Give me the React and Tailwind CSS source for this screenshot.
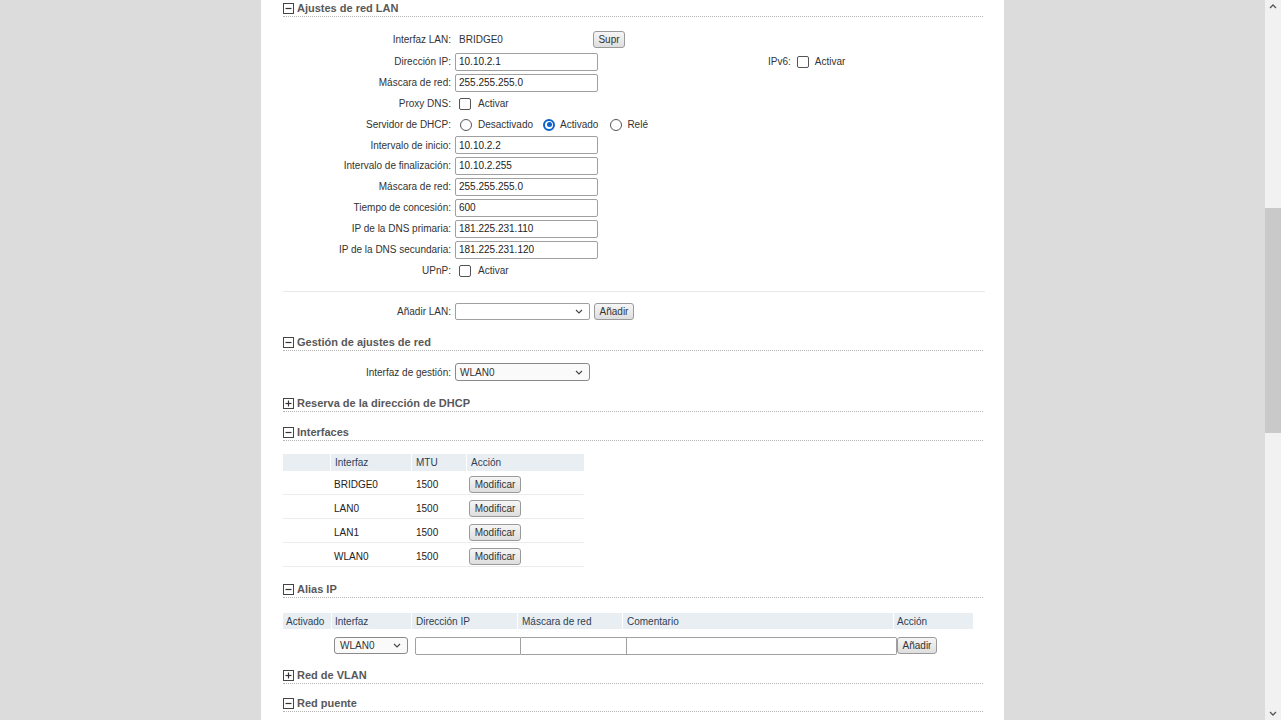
import React from "react";

function SectionHeader({ title, open = true }) {
  return (
    <div className="h-[17px] flex items-center border-b border-dotted border-[#b5b5b5]">
      <span className="w-[11px] h-[11px] border border-[#444] flex items-center justify-center mr-[3px] bg-white">
        <svg width="9" height="9" viewBox="0 0 9 9">
          <line x1="1.5" y1="4.5" x2="7.5" y2="4.5" stroke="#333" strokeWidth="1.2" />
          {!open && <line x1="4.5" y1="1.5" x2="4.5" y2="7.5" stroke="#333" strokeWidth="1.2" />}
        </svg>
      </span>
      <span className="text-[11px] font-bold text-[#585858]">{title}</span>
    </div>
  );
}

function Chevron() {
  return (
    <svg width="8" height="5" viewBox="0 0 8 5" className="shrink-0">
      <polyline points="1,1 4,4 7,1" fill="none" stroke="#444" strokeWidth="1.1" />
    </svg>
  );
}

function TextInput({ value, w = "w-[143px]" }) {
  return (
    <div className={`${w} h-[18px] border border-[#a0a0a0] rounded-[2px] bg-white flex items-center pl-[3px] text-[10px] text-[#222]`}>
      {value}
    </div>
  );
}

function Button({ children, w }) {
  return (
    <div className={`${w} h-[17px] border border-[#9a9a9a] rounded-[3px] bg-gradient-to-b from-[#f6f6f6] to-[#dedede] flex items-center justify-center text-[10px] text-[#333]`}>
      {children}
    </div>
  );
}

function Checkbox() {
  return <span className="w-[12px] h-[12px] border border-[#555] rounded-[2px] bg-white inline-block shrink-0" />;
}

function Radio({ checked }) {
  return checked ? (
    <span className="w-[12px] h-[12px] rounded-full border-[2px] border-[#0b63ce] flex items-center justify-center shrink-0">
      <span className="w-[5px] h-[5px] rounded-full bg-[#0b63ce]" />
    </span>
  ) : (
    <span className="w-[12px] h-[12px] rounded-full border border-[#555] bg-white shrink-0" />
  );
}

function Row({ label, children, h = "h-[21px]" }) {
  return (
    <div className={`${h} flex items-center`}>
      <div className="w-[169px] text-right pr-[1px]">{label}</div>
      <div className="ml-[3px] flex items-center">{children}</div>
    </div>
  );
}

const fields = [
  ["Intervalo de inicio:", "10.10.2.2", "h-[20px]"],
  ["Intervalo de finalización:", "10.10.2.255"],
  ["Máscara de red:", "255.255.255.0"],
  ["Tiempo de concesión:", "600"],
  ["IP de la DNS primaria:", "181.225.231.110"],
  ["IP de la DNS secundaria:", "181.225.231.120"],
];

const interfaces = ["BRIDGE0", "LAN0", "LAN1", "WLAN0"];

export default function App() {
  return (
    <div
      className="h-[720px] w-full flex bg-[#dcdcdc] overflow-hidden text-[10px] text-[#333]"
      style={{ fontFamily: '"Liberation Sans", Arial, sans-serif' }}
    >
      <div className="w-[261px] shrink-0" />
      <div className="w-[743px] shrink-0 bg-white pl-[22px] pr-[21px]">
        <SectionHeader title="Ajustes de red LAN" />

        <div className="mt-[11px]">
          <Row label="Interfaz LAN:" h="h-[23px]">
            <span className="w-[138px] pl-[4px]">BRIDGE0</span>
            <Button w="w-[32px]">Supr</Button>
          </Row>
          <Row label="Dirección IP:">
            <TextInput value="10.10.2.1" />
            <span className="ml-[170px]">IPv6:</span>
            <span className="ml-[6px] flex"><Checkbox /></span>
            <span className="ml-[6px]">Activar</span>
          </Row>
          <Row label="Máscara de red:">
            <TextInput value="255.255.255.0" />
          </Row>
          <Row label="Proxy DNS:">
            <span className="ml-[4px] flex"><Checkbox /></span>
            <span className="ml-[7px]">Activar</span>
          </Row>
          <Row label="Servidor de DHCP:">
            <span className="ml-[5px] flex"><Radio /></span>
            <span className="ml-[6px]">Desactivado</span>
            <span className="ml-[10px] flex"><Radio checked /></span>
            <span className="ml-[5px]">Activado</span>
            <span className="ml-[12px] flex"><Radio /></span>
            <span className="ml-[5px]">Relé</span>
          </Row>
          {fields.map(([l, v, h]) => (
            <Row key={l} label={l} h={h}>
              <TextInput value={v} />
            </Row>
          ))}
          <Row label="UPnP:">
            <span className="ml-[4px] flex"><Checkbox /></span>
            <span className="ml-[7px]">Activar</span>
          </Row>
        </div>

        <div className="mt-[10px] border-t border-[#e8e8e8] mr-[-2px]" />

        <div className="mt-[9px]">
          <Row label="Añadir LAN:" h="h-[20px]">
            <div className="w-[135px] h-[17px] border border-[#a0a0a0] rounded-[2px] bg-white flex items-center justify-end pr-[6px]">
              <Chevron />
            </div>
            <span className="ml-[4px]"><Button w="w-[40px]">Añadir</Button></span>
          </Row>
        </div>

        <div className="mt-[13px]">
          <SectionHeader title="Gestión de ajustes de red" />
        </div>
        <div className="mt-[11px]">
          <Row label="Interfaz de gestión:" h="h-[20px]">
            <div className="w-[135px] h-[18px] border border-[#8a8a8a] rounded-[3px] bg-[#fafafa] flex items-center justify-between pl-[4px] pr-[6px]">
              <span>WLAN0</span>
              <Chevron />
            </div>
          </Row>
        </div>

        <div className="mt-[13px]">
          <SectionHeader title="Reserva de la dirección de DHCP" open={false} />
        </div>
        <div className="mt-[12px]">
          <SectionHeader title="Interfaces" />
        </div>

        <div className="mt-[13px] w-[301px]">
          <div className="h-[17px] flex gap-[1px] text-[#2c3e55]">
            <div className="w-[47px] bg-[#e9eef2]" />
            <div className="w-[80px] bg-[#e9eef2] flex items-center pl-[4px]">Interfaz</div>
            <div className="w-[54px] bg-[#e9eef2] flex items-center pl-[4px]">MTU</div>
            <div className="flex-1 bg-[#e9eef2] flex items-center pl-[4px]">Acción</div>
          </div>
          {interfaces.map((n) => (
            <div key={n} className="h-[24px] pt-[4px] flex items-center border-b border-[#ececec] text-[#222]">
              <div className="w-[48px]" />
              <div className="w-[81px] pl-[3px]">{n}</div>
              <div className="w-[54px] pl-[4px]">1500</div>
              <div className="pl-[3px]"><Button w="w-[52px]">Modificar</Button></div>
            </div>
          ))}
        </div>

        <div className="mt-[14px]">
          <SectionHeader title="Alias IP" />
        </div>

        <div className="mt-[15px] w-[690px]">
          <div className="h-[16px] flex gap-[1px] text-[#2c3e55]">
            <div className="w-[48px] bg-[#e9eef2] flex items-center pl-[3px]">Activado</div>
            <div className="w-[79px] bg-[#e9eef2] flex items-center pl-[3px]">Interfaz</div>
            <div className="w-[105px] bg-[#e9eef2] flex items-center pl-[4px]">Dirección IP</div>
            <div className="w-[104px] bg-[#e9eef2] flex items-center pl-[4px]">Máscara de red</div>
            <div className="w-[270px] bg-[#e9eef2] flex items-center pl-[4px]">Comentario</div>
            <div className="flex-1 bg-[#e9eef2] flex items-center pl-[3px]">Acción</div>
          </div>
          <div className="h-[33px] flex items-center">
            <div className="w-[51px]" />
            <div className="w-[74px] h-[17px] border border-[#8a8a8a] rounded-[3px] bg-[#fafafa] flex items-center justify-between pl-[5px] pr-[6px]">
              <span>WLAN0</span>
              <Chevron />
            </div>
            <div className="ml-[7px] flex">
              <div className="w-[106px] h-[18px] border border-[#a0a0a0] rounded-l-[2px] bg-white" />
              <div className="w-[106px] h-[18px] border border-l-0 border-[#a0a0a0] bg-white" />
              <div className="w-[270px] h-[18px] border border-l-0 border-[#a0a0a0] rounded-r-[2px] bg-white" />
            </div>
            <Button w="w-[40px]">Añadir</Button>
          </div>
        </div>

        <div className="mt-[5px]">
          <SectionHeader title="Red de VLAN" open={false} />
        </div>
        <div className="mt-[11px]">
          <SectionHeader title="Red puente" />
        </div>
      </div>
      <div className="flex-1" />
      <div className="w-[16px] shrink-0 bg-[#f1f1f1] flex flex-col">
        <div className="h-[208px] flex justify-center pt-[4px]">
          <svg width="8" height="5" viewBox="0 0 8 5">
            <polyline points="1,4 4,1 7,4" fill="none" stroke="#555" strokeWidth="1.3" />
          </svg>
        </div>
        <div className="h-[225px] bg-[#c9c9c9]" />
        <div className="flex-1 flex items-end justify-center pb-[4px]">
          <svg width="8" height="5" viewBox="0 0 8 5">
            <polyline points="1,1 4,4 7,1" fill="none" stroke="#555" strokeWidth="1.3" />
          </svg>
        </div>
      </div>
    </div>
  );
}
